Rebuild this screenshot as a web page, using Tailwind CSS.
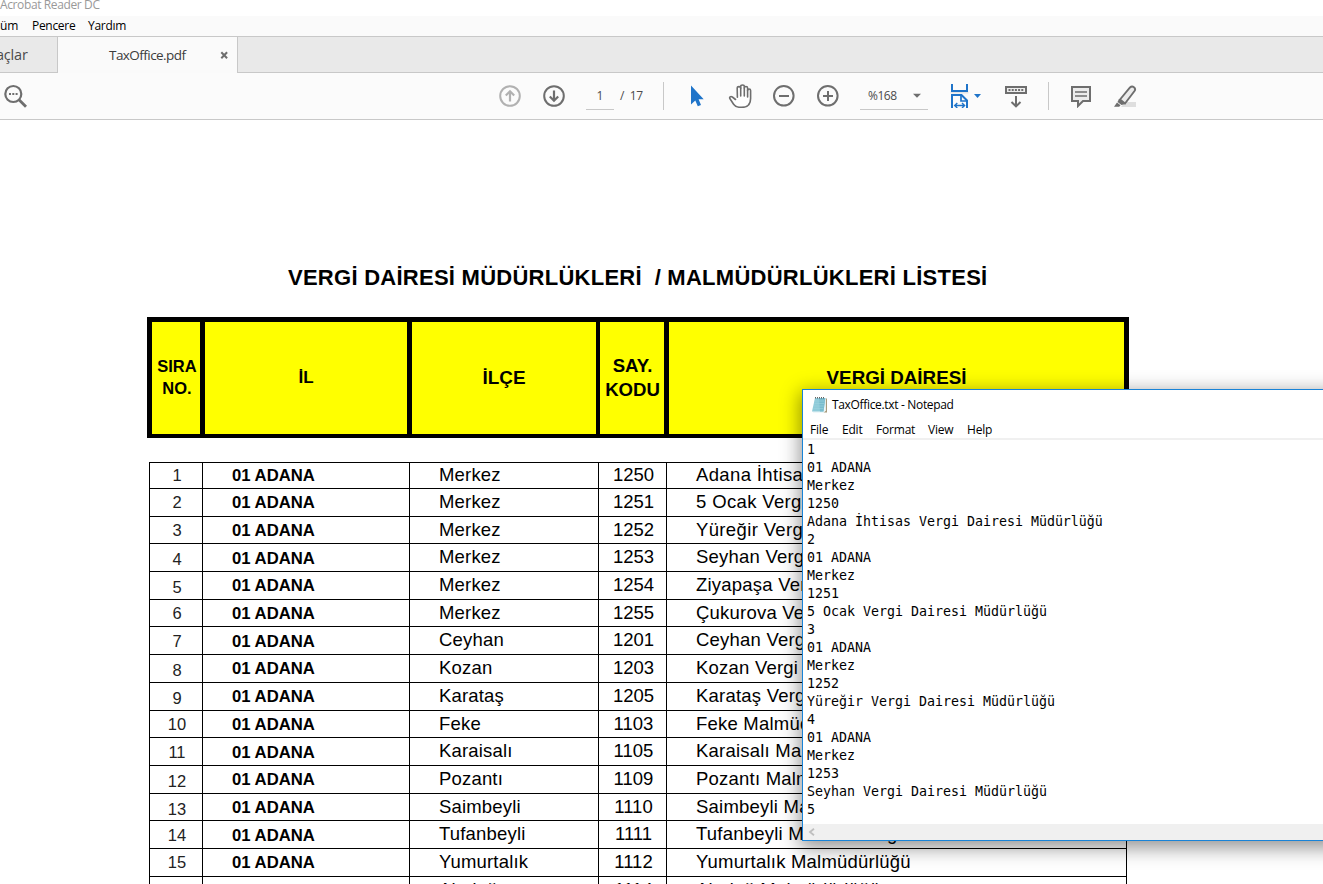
<!DOCTYPE html>
<html lang="tr">
<head>
<meta charset="utf-8">
<title>TaxOffice.pdf - Acrobat Reader DC</title>
<script src="https://cdn.jsdelivr.net/npm/@tailwindcss/browser@4"></script>
</head>
<body class="w-[1323px] h-[884px] overflow-hidden bg-white relative font-['Open_Sans','Noto_Sans',sans-serif] text-black">
<div class="flex flex-col h-[884px] overflow-hidden whitespace-nowrap">
  <header class="h-4 shrink-0 bg-white overflow-hidden"><div class="text-[12px] leading-4 -mt-[3px] text-[#999] tracking-[-0.38px]">Acrobat Reader DC</div></header>
  <nav class="h-5 shrink-0 bg-[#fafafa] flex text-[12px] leading-5 tracking-[-0.3px]">
    <span class="w-8 tracking-[-0.2px]">üm</span><span class="w-14">Pencere</span><span>Yardım</span>
  </nav>
  <div class="h-[37px] shrink-0 flex border-t border-[#c8c8c8] text-[14px] text-[#4b4b4b]">
    <div class="w-[58px] border-r border-b border-[#c8c8c8] bg-[#e9e9e9] leading-[35px] overflow-hidden"><span class="-ml-[4px] text-[14.5px] tracking-[-0.2px]">açlar</span></div>
    <div class="w-[179px] bg-[#fafafa] flex items-center">
      <span class="ml-[51px] w-[111px] text-[13.5px] tracking-[-0.55px] text-[#3c3c3c]">TaxOffice.pdf</span>
      <svg class="w-[9px] h-[9px]" viewBox="0 0 9 9" fill="none" stroke="#6e6e6e" stroke-width="2"><path d="M1.3 1.3l5.8 6M7.1 1.3l-5.8 6"/></svg>
    </div>
    <div class="flex-1 border-l border-b border-[#c8c8c8] bg-[#e9e9e9]"></div>
  </div>
  <div class="h-[47px] shrink-0 bg-[#fbfbfb] border-b border-[#c8c8c8] flex items-center text-[12px] text-[#4b4b4b]">
    <svg class="w-6 h-6 ml-[3px]" viewBox="0 0 24 24" fill="none" stroke="#6e6e6e"><circle cx="10.3" cy="10" r="8" stroke-width="2.2"/><path d="M16 15.7l7 7" stroke-width="2.8"/><path d="M6 10h2M9.3 10h2M12.6 10h2" stroke-width="2"/></svg>
    <svg class="w-6 h-6 ml-[471px]" viewBox="0 0 24 24" fill="none" stroke="#b1b1b1" stroke-width="2"><circle cx="12" cy="12" r="9.8"/><path d="M12 17.5V7.500M7.800 11.500L12 7.300l4.200 4.200" stroke-width="2.2"/></svg>
    <svg class="w-6 h-6 ml-5" viewBox="0 0 24 24" fill="none" stroke="#6e6e6e" stroke-width="2"><circle cx="12" cy="12" r="9.8"/><path d="M12 6.500v10M7.800 12.500l4.200 4.200 4.200-4.200" stroke-width="2.2"/></svg>
    <div class="ml-5 w-7 h-[27px] border-b border-[#c8c8c8] text-center leading-[26px]">1</div>
    <div class="ml-1.5 w-6 whitespace-pre tracking-[-0.3px]">/  17</div>
    <div class="ml-[19px] w-px h-7 bg-[#c8c8c8]"></div>
    <svg class="w-6 h-6 ml-5" viewBox="0 0 24 24"><path d="M7 1.5v19l4.300-4 2.500 5.800 3.200-1.400-2.400-5.600h5.100z" fill="#1f74c9"/></svg>
    <svg class="w-6 h-6 ml-5" viewBox="0 0 24 24" fill="#fff" stroke="#6e6e6e" stroke-width="1.6" stroke-linejoin="round" stroke-linecap="round"><path d="M7.5 15.500L4.300 13c-1.700-1.200-3.300.2-2.300 1.800l3.600 5.400c1.600 2.400 3.900 3.200 7.800 3.200 5.800 0 9.200-3.300 9.200-9V6.500c0-2-3-2-3 0V4c0-2-3.300-2-3.300 0V2.600c0-2.100-3.600-2.100-3.600 0V4.300c0-2.200-3.500-2.200-3.500 0l.2 9"/><path d="M12.700 4v8M16.300 4v8M19.600 6.500V13" fill="none"/></svg>
    <svg class="w-6 h-6 ml-5" viewBox="0 0 24 24" fill="none" stroke="#6e6e6e" stroke-width="2"><circle cx="11.8" cy="11.8" r="9.8"/><path d="M7 12h10"/></svg>
    <svg class="w-6 h-6 ml-5" viewBox="0 0 24 24" fill="none" stroke="#6e6e6e" stroke-width="2"><circle cx="11.8" cy="11.8" r="9.8"/><path d="M7 12h10M12 7v10"/></svg>
    <div class="ml-5 w-[68px] h-[27px] border-b border-[#c8c8c8] flex items-center pl-2 pr-[7px] justify-between"><span class="tracking-[-0.5px]">%168</span><svg class="w-[8px] h-[5px]" viewBox="0 0 9 5"><path d="M0 .5h9L4.500 5z" fill="#6e6e6e"/></svg></div>
    <svg class="w-6 h-6 ml-5" viewBox="0 0 24 24" fill="none" stroke="#1f74c9" stroke-width="2"><path d="M2.500 8.500h18" stroke="#e4e4e4"/><path d="M4 0v7h15V0M4 24V11h9.500l5.500 5.500V24"/><path d="M13 11v6h6" stroke-width="1.700"/><path d="M7 21.500h9.500M9.300 19l-2.600 2.500 2.600 2.500M14 19l2.600 2.500L14 24" stroke-width="1.400"/></svg>
    <svg class="w-[7px] h-[4px] ml-0.5" viewBox="0 0 7 4"><path d="M0 0h7L3.500 4z" fill="#1f74c9"/></svg>
    <svg class="w-6 h-6 ml-[23px]" viewBox="0 0 24 24" fill="none" stroke="#6e6e6e" stroke-width="2"><path d="M2 3h20v6H2z" fill="#eee"/><path d="M4.500 6h15" stroke-dasharray="2 1.200"/><path d="M12 12v10M7.500 18l4.500 4.300 4.500-4.300"/></svg>
    <div class="ml-5 w-px h-7 bg-[#c8c8c8]"></div>
    <svg class="w-6 h-6 ml-5" viewBox="0 0 24 24" fill="#ececec" stroke="#6e6e6e" stroke-width="2"><path d="M3 3h18v14h-7l-5 5v-5H3z"/><path d="M6 8h12M6 12h12" stroke-width="1.400"/></svg>
    <svg class="w-6 h-6 ml-5" viewBox="0 0 24 24"><path d="M12 18h11v5H8z" fill="#dedede"/><path d="M7 15.500L17 3.500c2.500-2.500 6.500.5 4.500 3.500L12 19.500z" fill="#ececec" stroke="#6e6e6e" stroke-width="1.900"/><path d="M6 15l6.500 5-4 1-4-3zM4 18.500l3.500 2.700-1.300 1.500H1z" fill="#6e6e6e"/></svg>
  </div>
  <main class="flex-1 bg-white font-['Liberation_Sans',Arial,sans-serif] pl-[147px]">
    <h1 class="ml-[141px] pt-[145px] text-[22px] leading-[26px] font-bold whitespace-pre tracking-[0.26px]">VERGİ DAİRESİ MÜDÜRLÜKLERİ  / MALMÜDÜRLÜKLERİ LİSTESİ</h1>
    <div class="mt-[26px] w-[982px] h-[121px] bg-black pt-[5px] pb-1 px-[5px] grid grid-cols-[48px_202px_184px_64px_455px] font-bold text-center">
      <div class="bg-[#ff0] text-[16.5px] leading-[22px] pt-[33px] pl-0.5">SIRA<br>NO.</div>
      <div class="bg-[#ff0] ml-[5px] -mr-[5px] text-[17px] leading-[22px] pt-[45px]">İL</div>
      <div class="bg-[#ff0] ml-[10px] -mr-[10px] text-[18.900px] leading-[24px] pt-[44px]">İLÇE</div>
      <div class="bg-[#ff0] ml-[14px] -mr-[14px] text-[18.600px] leading-[24px] pt-[32px] pl-px">SAY.<br>KODU</div>
      <div class="bg-[#ff0] ml-[19px] w-[455px] text-[18.800px] leading-[24px] pt-[44px]">VERGİ DAİRESİ</div>
    </div>
    <div id="rows" class="mt-6 ml-0.5 w-[978px] border-r border-black"></div>
  </main>
</div>

<section class="absolute left-[802px] top-[389px] w-[540px] h-[452px] bg-white border border-[#1883d7] shadow-[0_5px_18px_2px_rgba(0,0,0,0.42)] flex flex-col whitespace-nowrap text-[12px]">
  <div class="h-[30px] shrink-0 flex items-center pl-[8px]">
    <svg class="w-[17px] h-[18px]" viewBox="0 0 17 18"><path d="M5 2.500h11v14H4z" fill="#a8997a"/><path d="M4.500 2h10.400v12.500L12.500 17H2z" fill="#eef7f9"/><path d="M4 2h10.300L12.500 15.500H1z" fill="#8fcbd9"/><path d="M8 2h6.300L12.500 15.500H9z" fill="#79bccd"/><path d="M3.800 5h9.700M3.400 7.500h9.700M3 10h9.700M2.600 12.500h9.700" stroke="#9dd3de" stroke-width=".6"/><path d="M4.500 1v1.500M6.500 1v1.500M8.500 1v1.500M10.500 1v1.500M12.500 1v1.500" stroke="#555" stroke-width=".9"/></svg>
    <span class="ml-1 tracking-[-0.33px]">TaxOffice.txt - Notepad</span>
  </div>
  <div class="h-[18px] shrink-0 flex leading-5 pl-[7px] tracking-[-0.2px]"><span class="w-8">File</span><span class="w-[34px]">Edit</span><span class="w-[52px]">Format</span><span class="w-[39px]">View</span><span>Help</span></div>
  <div class="h-0.5 shrink-0 bg-[#f0f0f0]"></div>
  <pre class="flex-1 pl-1 pt-px font-['DejaVu_Sans_Mono',monospace] text-[13.290px] leading-[18px]">1
01 ADANA
Merkez
1250
Adana İhtisas Vergi Dairesi Müdürlüğü
2
01 ADANA
Merkez
1251
5 Ocak Vergi Dairesi Müdürlüğü
3
01 ADANA
Merkez
1252
Yüreğir Vergi Dairesi Müdürlüğü
4
01 ADANA
Merkez
1253
Seyhan Vergi Dairesi Müdürlüğü
5</pre>
  <div class="h-4 shrink-0 bg-[#f0f0f0] flex items-center pl-[5px]"><svg class="w-[7px] h-[8px]" viewBox="0 0 7 8" fill="none" stroke="#bfbfbf" stroke-width="1.800"><path d="M6 .7L2 4l4 3.300"/></svg></div>
</section>
<script>
// [height, ilçe, code, office, number drop, bold drop, text drop]
const rows = [
 [26,'Merkez','1250','Adana İhtisas Vergi Dairesi Müdürlüğü',19,19,20],
 [28,'Merkez','1251','5 Ocak Vergi Dairesi Müdürlüğü',20,20,21],
 [27,'Merkez','1252','Yüreğir Vergi Dairesi Müdürlüğü',20,20,21],
 [28,'Merkez','1253','Seyhan Vergi Dairesi Müdürlüğü',22,21,21],
 [28,'Merkez','1254','Ziyapaşa Vergi Dairesi Müdürlüğü',22,20,21],
 [27,'Merkez','1255','Çukurova Vergi Dairesi Müdürlüğü',20,20,21],
 [28,'Ceyhan','1201','Ceyhan Vergi Dairesi Müdürlüğü',21,21,21],
 [28,'Kozan','1203','Kozan Vergi Dairesi Müdürlüğü',22,20,21],
 [28,'Karataş','1205','Karataş Vergi Dairesi Müdürlüğü',22,20,21],
 [27,'Feke','1103','Feke Malmüdürlüğü',20,20,21],
 [28,'Karaisalı','1105','Karaisalı Malmüdürlüğü',21,21,21],
 [28,'Pozantı','1109','Pozantı Malmüdürlüğü',22,20,21],
 [27,'Saimbeyli','1110','Saimbeyli Malmüdürlüğü',22,20,21],
 [28,'Tufanbeyli','1111','Tufanbeyli Malmüdürlüğü',21,21,21],
 [28,'Yumurtalık','1112','Yumurtalık Malmüdürlüğü',20,20,21],
 [28,'Aladağ','1114','Aladağ Malmüdürlüğü',21,21,21]
];
document.getElementById('rows').innerHTML = rows.map((r, i) => `
<div class="grid grid-cols-[53px_207px_189px_68px_460px] border-t border-black leading-5 text-[18.500px]" style="height:${r[0]}px">
<div class="border-l border-black text-center pl-0.5 text-[16.500px] text-[#222]" style="padding-top:${r[4]-17}px">${i + 1}</div>
<div class="border-l border-black pl-[29px] font-bold text-[16.700px]" style="padding-top:${r[5]-16}px">01 ADANA</div>
<div class="border-l border-black pl-[29px] tracking-[0.18px]" style="padding-top:${r[6]-17.6}px">${r[1]}</div>
<div class="border-l border-black text-center pl-0.5" style="padding-top:${r[6]-17.6}px">${r[2]}</div>
<div class="border-l border-black pl-[29px] ${i < 3 ? 'tracking-[0.36px]' : 'tracking-[0.22px]'}" style="padding-top:${r[6]-17.6}px">${r[3]}</div>
</div>`).join('');
</script>
</body>
</html>
